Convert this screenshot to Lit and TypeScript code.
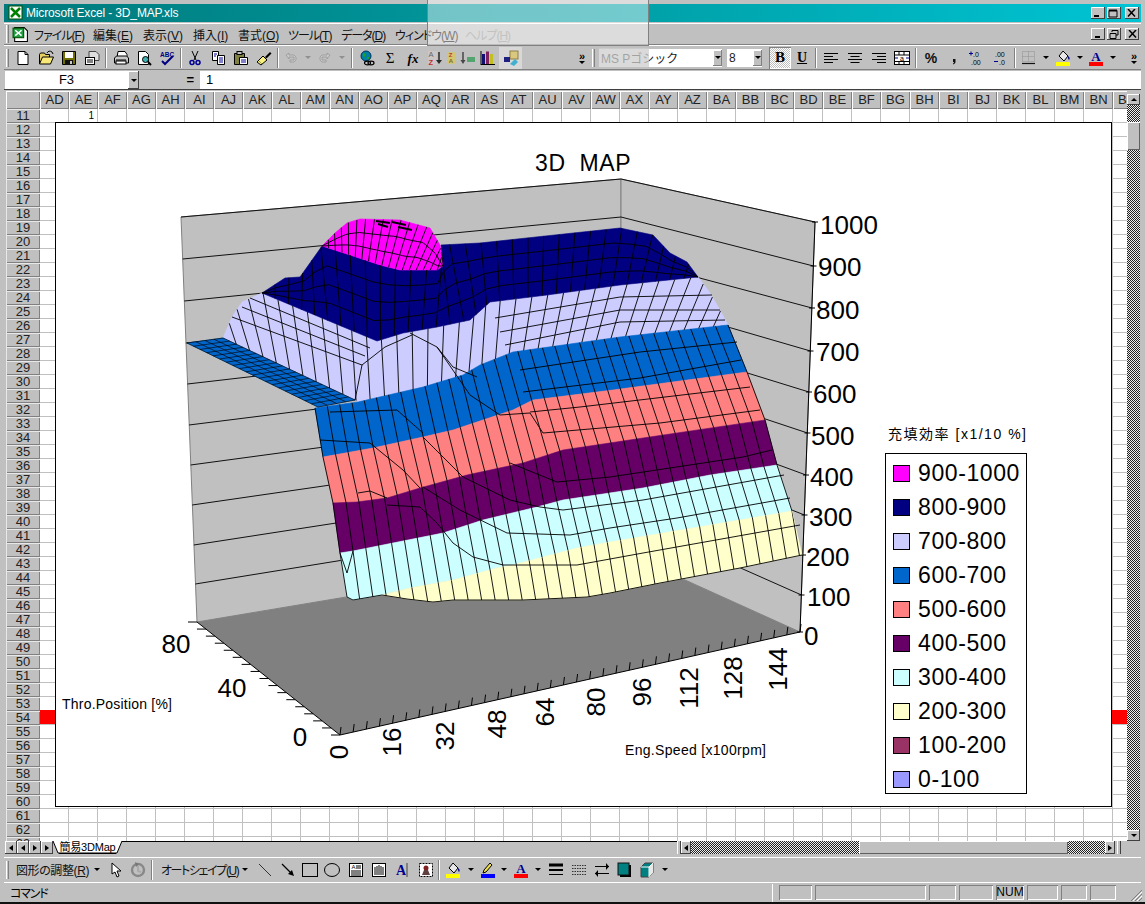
import { LitElement, html, css, svg } from 'lit';
import { customElement } from 'lit/decorators.js';

type P = [number, number];

// ---- surface outlines, read off the picture (page coordinates) ----
const NAVY_TOP: P[] = [[262, 293], [285, 278], [300, 277], [322, 246], [350, 255], [380, 265], [400, 270], [437, 270], [443, 266], [441, 245], [480, 243], [620, 228], [653, 235], [670, 253], [687, 262], [698, 277]];
const NAVY_LOW: P[] = [[262, 293], [377, 341], [403, 333], [437, 327], [470, 320], [490, 302], [547, 295], [620, 285], [698, 277]];
const MAGENTA_TOP: P[] = [[322, 246], [335, 233], [347, 223], [360, 219], [400, 220], [430, 228], [440, 245], [443, 266]];
const MAGENTA_LOW: P[] = [[322, 246], [350, 255], [380, 265], [400, 270], [437, 270], [443, 266]];
const LAV_TOP: P[] = [[223, 338], [232, 317], [242, 302], [262, 293], ...NAVY_LOW.slice(1), [710, 293], [720, 310], [728, 325]];
const LAV_LOW: P[] = [[223, 338], [355, 400], [358, 402], [423, 387], [463, 375], [480, 365], [513, 352], [620, 337], [728, 325]];
const B2: P[] = [[315, 408], [358, 402], [423, 387], [463, 375], [480, 365], [513, 352], [620, 337], [728, 325]];
const B3: P[] = [[323, 457], [373, 448], [423, 437], [453, 430], [513, 410], [533, 400], [613, 390], [747, 372]];
const B4: P[] = [[333, 503], [357, 502], [387, 498], [420, 488], [467, 475], [523, 463], [563, 450], [643, 438], [765, 420]];
const B5: P[] = [[340, 553], [353, 551], [393, 543], [443, 533], [483, 520], [537, 507], [563, 500], [643, 488], [710, 475], [777, 465]];
const B6: P[] = [[347, 597], [353, 600], [382, 595], [410, 588], [453, 580], [497, 568], [513, 565], [577, 548], [610, 542], [693, 528], [792, 511]];
const B6Y: P[] = B6.slice(2);
const B7: P[] = [[382, 595], [407, 599], [433, 602], [453, 600], [523, 600], [587, 597], [610, 593], [660, 583], [740, 568], [802, 555]];
const SHELF: P[] = [[187, 343], [223, 338], [355, 400], [318, 407]];

// rows of the mesh that bend across the bands, traced by hand
const EXTRA: P[][] = [
  [[232, 317], [362, 365], [385, 347], [412, 335]],
  [[250, 298], [370, 348]],
  [[242, 307], [365, 356]],
  [[362, 365], [355, 400]],
  [[495, 318], [620, 297], [712, 295]],
  [[500, 332], [620, 310], [720, 310]],
  [[505, 345], [620, 322], [725, 320]],
  [[410, 333], [437, 347], [453, 367], [477, 377]],
  [[437, 347], [470, 395], [500, 415], [530, 413]],
  [[520, 370], [640, 352], [737, 342]],
  [[523, 392], [640, 378], [741, 360]],
  [[320, 440], [370, 443]],
  [[358, 493], [370, 491], [387, 498]],
  [[387, 505], [420, 507], [437, 523], [453, 543], [473, 557], [503, 565], [577, 565], [643, 553], [800, 525]],
  [[423, 487], [460, 510], [507, 533], [570, 535], [610, 528], [677, 518], [790, 498]],
  [[510, 463], [557, 482], [610, 477], [743, 457], [772, 450]],
  [[423, 437], [463, 477], [510, 500], [540, 507], [563, 510], [643, 500], [784, 475]],
  [[530, 413], [543, 433], [660, 423], [760, 410]],
  [[530, 412], [580, 407], [750, 387]],
  [[370, 443], [403, 470], [420, 488]],
  [[330, 412], [397, 410], [423, 433]],
  [[340, 553], [347, 573], [353, 551]],
];

const LEFT_Y = [217, 259, 301, 343, 384, 425, 465, 505, 545, 584];
const BACK_Y = [179, 217, 257, 296, 334, 371, 407, 443, 479, 515];
const RIGHT_Y = [222, 266, 308, 351, 392, 433, 475, 515, 555, 595];

const VALUE_LABELS: [string, number, number][] = [
  ['1000', 820, 225], ['900', 818, 267], ['800', 816, 310], ['700', 816, 352], ['600', 813, 394],
  ['500', 811, 436], ['400', 810, 477], ['300', 809, 517], ['200', 806, 557], ['100', 807, 597], ['0', 804, 636],
];
const SPEED_LABELS: [string, number, number][] = [
  ['0', 339, 752], ['16', 392, 742], ['32', 445, 736], ['48', 497, 724], ['64', 545, 712],
  ['80', 596, 702], ['96', 642, 692], ['112', 689, 688], ['128', 733, 678], ['144', 778, 669],
];
const THROTTLE_LABELS: [string, number, number][] = [['80', 176, 644], ['40', 232, 688], ['0', 300, 737]];

const LEGEND: [string, string][] = [
  ['900-1000', '#ff00ff'], ['800-900', '#000080'], ['700-800', '#ccccff'], ['600-700', '#0066cc'], ['500-600', '#ff8080'],
  ['400-500', '#660066'], ['300-400', '#ccffff'], ['200-300', '#ffffcc'], ['100-200', '#993366'], ['0-100', '#9999ff'],
];

const mix = (a: P, b: P, t: number): P => [a[0] + (b[0] - a[0]) * t, a[1] + (b[1] - a[1]) * t];
const pts = (p: P[]) => p.map((q) => `${q[0].toFixed(1)},${q[1].toFixed(1)}`).join(' ');
const dist = (a: P, b: P) => Math.hypot(a[0] - b[0], a[1] - b[1]);

function resample(poly: P[], n: number): P[] {
  let total = 0;
  for (let i = 1; i < poly.length; i++) total += dist(poly[i - 1], poly[i]);
  const out: P[] = [];
  let seg = 0;
  let walked = 0;
  for (let k = 0; k <= n; k++) {
    const want = (total * k) / n;
    while (seg < poly.length - 2 && walked + dist(poly[seg], poly[seg + 1]) < want) {
      walked += dist(poly[seg], poly[seg + 1]);
      seg++;
    }
    const d = dist(poly[seg], poly[seg + 1]) || 1;
    out.push(mix(poly[seg], poly[seg + 1], Math.min(1, (want - walked) / d)));
  }
  return out;
}

function rowLine(top: P[], low: P[], f: number): string {
  const a = resample(top, 30);
  const b = resample(low, 30);
  return a.map((p, i) => {
    const q = mix(p, b[i], f);
    return `${i ? 'L' : 'M'}${q[0].toFixed(1)} ${q[1].toFixed(1)}`;
  }).join('');
}

function mesh(top: P[], low: P[], n: number, rows: number[] = []): string {
  const a = resample(top, n);
  const b = resample(low, n);
  let d = '';
  a.forEach((p, i) => {
    d += `M${p[0].toFixed(1)} ${p[1].toFixed(1)}L${b[i][0].toFixed(1)} ${b[i][1].toFixed(1)}`;
  });
  rows.forEach((f) => {
    d += rowLine(top, low, f);
  });
  return d;
}

// columns of the yellow band carry on from the cyan ones, the band's clip path trims them
function yellowMesh(): string {
  let d = '';
  resample(B6, 34).forEach((p) => {
    d += `M${p[0].toFixed(1)} ${p[1].toFixed(1)}l10 60`;
  });
  return d;
}

function shelfMesh(): string {
  const [a, b, c, e] = SHELF;
  let d = '';
  for (let i = 0; i <= 20; i++) {
    const p = mix(a, e, i / 20);
    const q = mix(b, c, i / 20);
    d += `M${p[0]} ${p[1]}L${q[0]} ${q[1]}`;
  }
  for (let i = 0; i <= 4; i++) {
    const p = mix(a, b, i / 4);
    const q = mix(e, c, i / 4);
    d += `M${p[0]} ${p[1]}L${q[0]} ${q[1]}`;
  }
  return d;
}

@customElement('surface-chart')
export class SurfaceChart extends LitElement {
  static styles = css`
    :host {
      display: block;
      position: relative;
      width: 1057px;
      height: 685px;
      font-family: 'Liberation Sans', Arial, sans-serif;
    }
    svg {
      display: block;
    }
    text {
      font-family: 'Liberation Sans', Arial, sans-serif;
      fill: #000;
    }
    .title {
      font-size: 23px;
      letter-spacing: 0.6px;
      white-space: pre;
    }
    .big {
      font-size: 26px;
      dominant-baseline: central;
    }
    .small {
      font-size: 14px;
    }
    .cjk {
      font-family: 'Liberation Sans', 'Noto Sans CJK JP', sans-serif;
      font-size: 14px;
      white-space: pre;
    }
    .legend {
      position: absolute;
      left: 830px;
      top: 331px;
      width: 142px;
      height: 341px;
      box-sizing: border-box;
      border: 1px solid #000;
      background: #fff;
      display: flex;
      flex-direction: column;
      padding-top: 2px;
    }
    .legend-item {
      height: 34px;
      flex: none;
      display: flex;
      align-items: center;
      padding-left: 7px;
      font-size: 23px;
      letter-spacing: 0.6px;
      color: #000;
    }
    .swatch {
      width: 15px;
      height: 15px;
      border: 1px solid #000;
      margin-right: 8px;
      flex: none;
    }
  `;

  render() {
    const wallLines = LEFT_Y.map((y, i) => {
      const lx = 181 + (i * 16) / 10;
      const rx = 815 - (i * 15) / 10;
      return svg`<polyline points="${lx},${y} 621,${BACK_Y[i]} ${rx},${RIGHT_Y[i]}" fill="none" stroke="#111" stroke-width="1"/>`;
    });
    const leftTicks = Array.from({ length: 17 }, (_, i) => {
      const p = mix([197, 622], [340, 735], i / 16);
      return svg`<line x1="${p[0]}" y1="${p[1]}" x2="${p[0] - 9}" y2="${p[1]}" stroke="#000"/>`;
    });
    const frontTicks = Array.from({ length: 36 }, (_, i) => {
      const p = mix([340, 735], [800, 632], i / 35);
      return svg`<line x1="${p[0]}" y1="${p[1]}" x2="${p[0] + 1}" y2="${p[1] - 8}" stroke="#000"/>`;
    });
    const rightTicks = RIGHT_Y.concat(632).map((y, i) => {
      const x = 815 - (i * 15) / 10;
      return svg`<line x1="${x - 3}" y1="${y}" x2="${x + 3}" y2="${y}" stroke="#000"/>`;
    });
    const yellow: P[] = [...B6Y, ...B7.slice().reverse()];
    return html`
      <svg width="1057" height="685" viewBox="55 122 1057 685">
        <rect x="55.5" y="122.5" width="1056" height="684" fill="#fff" stroke="#000"/>
        <text class="title" x="535" y="171">3D  MAP</text>
        <polygon points="181,217 621,179 621,551 197,622" fill="#c0c0c0" stroke="#808080"/>
        <polygon points="621,179 815,222 800,632 621,551" fill="#c0c0c0" stroke="#808080"/>
        ${wallLines}
        <polygon points="197,622 621,551 800,632 340,735" fill="#808080"/>
        <line x1="197" y1="622" x2="340" y2="735" stroke="#000"/>
        <line x1="340" y1="735" x2="800" y2="632" stroke="#000"/>
        <line x1="815" y1="222" x2="800" y2="632" stroke="#000"/>
        ${leftTicks} ${frontTicks} ${rightTicks}

        <defs><clipPath id="yclip"><polygon points="${pts(yellow)}"/></clipPath></defs>
        <g stroke-width="0.6">
          <polygon points="${pts([...LAV_TOP, ...LAV_LOW.slice().reverse()])}" fill="#ccccff" stroke="#ccccff"/>
          <polygon points="${pts([...NAVY_TOP, ...NAVY_LOW.slice().reverse()])}" fill="#000080" stroke="#000080"/>
          <polygon points="${pts([...MAGENTA_TOP, ...MAGENTA_LOW.slice().reverse()])}" fill="#ff00ff" stroke="#ff00ff"/>
          <polygon points="${pts(SHELF)}" fill="#0066cc" stroke="#0066cc"/>
          <polygon points="${pts([...B2, ...B3.slice().reverse()])}" fill="#0066cc" stroke="#0066cc"/>
          <polygon points="${pts([...B3, ...B4.slice().reverse()])}" fill="#ff8080" stroke="#ff8080"/>
          <polygon points="${pts([...B4, ...B5.slice().reverse()])}" fill="#660066" stroke="#660066"/>
          <polygon points="${pts([...B5, ...B6.slice().reverse()])}" fill="#ccffff" stroke="#ccffff"/>
          <polygon points="${pts(yellow)}" fill="#ffffcc" stroke="#ffffcc"/>
        </g>
        <g fill="none" stroke="#000" stroke-width="0.9">
          <path d="${mesh(LAV_TOP, LAV_LOW, 36)}"/>
          <path d="${mesh(NAVY_TOP, NAVY_LOW, 32, [0.25, 0.5, 0.75])}"/>
          <path d="${mesh(MAGENTA_TOP, MAGENTA_LOW, 18, [0.35, 0.7])}"/>
          <path d="${shelfMesh()}" stroke-opacity="0.7"/>
          <path d="${mesh(B2, B3, 34)}"/>
          <path d="${mesh(B3, B4, 34)}"/>
          <path d="${mesh(B4, B5, 34)}"/>
          <path d="${mesh(B5, B6, 34)}"/>
          <path clip-path="url(#yclip)" d="${yellowMesh()}"/>
          <polyline points="${pts(B7)}"/>
          <polyline points="347,597 353,600 382,595"/>
          ${EXTRA.map((l) => svg`<polyline points="${pts(l)}"/>`)}
          <path d="M376 221l14 2M392 222l14 3M398 227l14 3M378 224l10 3" stroke-width="2"/>
        </g>

        ${VALUE_LABELS.map(([t, x, y]) => svg`<text class="big" x="${x}" y="${y}">${t}</text>`)}
        ${THROTTLE_LABELS.map(([t, x, y]) => svg`<text class="big" x="${x}" y="${y}" text-anchor="middle">${t}</text>`)}
        ${SPEED_LABELS.map(([t, x, y]) => svg`<text class="big" text-anchor="middle" transform="translate(${x} ${y}) rotate(-90)">${t}</text>`)}
        <text class="small" x="62" y="709" textLength="110">Thro.Position [%]</text>
        <text class="small" x="625" y="755" textLength="141">Eng.Speed [x100rpm]</text>
        <text class="cjk" x="888" y="439" textLength="138">充填効率 [x1/10 %]</text>
      </svg>
      <div class="legend">
        ${LEGEND.map(([t, c]) => html`
          <div class="legend-item"><span class="swatch" style="background:${c}"></span>${t}</div>
        `)}
      </div>
    `;
  }
}

// ---- toolbar glyphs, 16x16 ----
const ICONS: Record<string, unknown> = {
  new: svg`<path d="M3 1.500h7l3 3v10H3z" fill="#fff" stroke="#000"/><path d="M10 1.500v3h3" fill="none" stroke="#000"/>`,
  open: svg`<path d="M1.500 14V4.500l1-1.500h4l1 1.500h4V7" fill="#e8d060" stroke="#000"/><path d="M1.500 14l3-7h11l-3 7z" fill="#f8e878" stroke="#000"/><path d="M9 3c1-2 3-2.500 5-1l1 2" fill="none" stroke="#000"/>`,
  save: svg`<path d="M1.500 1.500h13v13h-13z" fill="#707000" stroke="#000"/><rect x="4" y="2" width="8" height="6" fill="#fff"/><rect x="4" y="10" width="8" height="5" fill="#111"/><rect x="9" y="11" width="2" height="3" fill="#ccc"/>`,
  form: svg`<path d="M5 1.500h7l3 3v6H5z" fill="#ddd" stroke="#444"/><rect x="1.500" y="7.500" width="9" height="7" fill="#fff" stroke="#000"/><path d="M3 10h6M3 12h6" stroke="#000"/>`,
  print: svg`<path d="M5 1.500h7l2 3v3H4z" fill="#fff" stroke="#000"/><path d="M1.500 8l2-2h10l2 2v5h-14z" fill="#c8c8c8" stroke="#000"/><path d="M3 10h10" stroke="#000"/><rect x="3" y="11" width="10" height="3" fill="#fff" stroke="#000"/>`,
  preview: svg`<path d="M2.500 1.500h7l3 3v10h-10z" fill="#fff" stroke="#000"/><circle cx="9.500" cy="9.500" r="3" fill="#40b0b0" stroke="#000"/><path d="M12 12l3 3" stroke="#000" stroke-width="2"/>`,
  spell: svg`<text x="1" y="6.500" font-size="6.500" font-family="Liberation Sans" font-weight="700" fill="#000080">ABC</text><path d="M3 11l3 3 8-8" fill="none" stroke="#000080" stroke-width="2"/>`,
  cut: svg`<path d="M5 1l4 9M11 1L7 10" stroke="#000" fill="none"/><circle cx="5" cy="12.500" r="2" fill="none" stroke="#000090" stroke-width="1.500"/><circle cx="11" cy="12.500" r="2" fill="none" stroke="#000090" stroke-width="1.500"/>`,
  copy: svg`<path d="M2.500 1.500h6v9h-6z" fill="#fff" stroke="#000"/><path d="M7.500 5.500h7v9h-7z" fill="#fff" stroke="#000"/><path d="M4 4h3M4 6h2M9 8h4M9 10h4M9 12h4" stroke="#000090"/>`,
  paste: svg`<path d="M1.500 3.500h10v11h-10z" fill="#808040" stroke="#000"/><rect x="4" y="1.500" width="5" height="3" fill="#c0c0c0" stroke="#000"/><path d="M6.500 7.500h8v7h-8z" fill="#fff" stroke="#000"/><path d="M8 10h5M8 12h5" stroke="#000090"/>`,
  brush: svg`<path d="M1 12l6-6 4 4-6 5z" fill="#f8f080" stroke="#000"/><path d="M9 7l5-5 1.500 1.500-5 5z" fill="#000"/><path d="M3 11l3 3" stroke="#a0a040"/>`,
  undo: svg`<path d="M3 5l3-2v2h5l2 2v3l-2 2H7v-2h4V7H6v2z" fill="#c8c8c8" stroke="#989898" stroke-width="0.800"/>`,
  redo: svg`<path d="M13 5l-3-2v2H5L3 7v3l2 2h4v-2H5V7h5v2z" fill="#c8c8c8" stroke="#989898" stroke-width="0.800"/>`,
  web: svg`<circle cx="7" cy="6" r="5" fill="#0080a0" stroke="#003060"/><path d="M4 3l3 1-1 3-2-1zM8 7l2 0 0 2-2 0z" fill="#20a020"/><ellipse cx="8.500" cy="13" rx="3" ry="1.800" fill="none" stroke="#000" stroke-width="1.200"/><ellipse cx="12" cy="13" rx="3" ry="1.800" fill="none" stroke="#000" stroke-width="1.200"/>`,
  sigma: svg`<text x="8" y="13" text-anchor="middle" font-size="15" font-family="Liberation Serif" fill="#000">Σ</text>`,
  fx: svg`<text x="8" y="12.500" text-anchor="middle" font-size="13" font-style="italic" font-weight="700" font-family="Liberation Serif" fill="#000">fx</text>`,
  sortA: svg`<g opacity="0.85"><rect x="0" y="1" width="9" height="14" fill="#d0c8c8"/><text x="0.500" y="7" font-size="7.500" font-family="Liberation Sans" fill="#555">A</text><text x="0.500" y="14.500" font-size="7.500" font-weight="700" font-family="Liberation Sans" fill="#c01010">Z</text><path d="M11 2v10" stroke="#111" stroke-width="1.500"/><path d="M8 10h6l-3 4z" fill="#111"/></g>`,
  sortZ: svg`<g opacity="0.85"><rect x="1" y="1" width="9" height="14" fill="#d8c860"/><text x="2" y="7" font-size="7.500" font-weight="700" font-family="Liberation Sans" fill="#c02020">Z</text><text x="2" y="14.500" font-size="7.500" font-weight="700" font-family="Liberation Sans" fill="#706010">A</text></g>`,
  filter: svg`<g opacity="0.85"><path d="M3 2v10" stroke="#333" stroke-width="1.500"/><path d="M0.500 10h5l-2.500 4z" fill="#333"/><path d="M7 7h8v5H7z" fill="#40a060"/></g>`,
  bars: svg`<path d="M1 14.500h14" stroke="#000"/><rect x="2" y="4" width="3" height="10" fill="#101070"/><rect x="6" y="1.500" width="3" height="12.500" fill="#802060"/><rect x="10" y="4" width="3" height="10" fill="#c0c020"/><path d="M1 1v14" stroke="#000"/>`,
  map: svg`<rect x="7" y="1" width="8" height="8" fill="#d8c880" stroke="#908040"/><rect x="1" y="7" width="6" height="5" fill="#202080" /><path d="M7 14l5-5 3 3-4 4z" fill="#40b0d0"/>`,
  align1: svg`<path d="M1 3.500h14M1 6.500h9M1 9.500h14M1 12.500h9" stroke="#000"/>`,
  align2: svg`<path d="M1 3.500h14M3.500 6.500h9M1 9.500h14M3.500 12.500h9" stroke="#000"/>`,
  align3: svg`<path d="M1 3.500h14M6 6.500h9M1 9.500h14M6 12.500h9" stroke="#000"/>`,
  merge: svg`<rect x="0.500" y="1.500" width="15" height="13" fill="#fff" stroke="#000"/><path d="M0.500 5h15M0.500 11.500h15M5 1.500V5M10 1.500V5M5 11.500v3M10 11.500v3" stroke="#000"/><text x="8" y="10.500" text-anchor="middle" font-size="7" font-family="Liberation Sans" fill="#000">a</text><path d="M1 8h3M15 8h-3" stroke="#000080"/>`,
  percent: svg`<text x="8" y="13" text-anchor="middle" font-size="14" font-weight="700" font-family="Liberation Sans" fill="#111">%</text>`,
  comma: svg`<path d="M7 9h2.500v3c0 1-1 2-2.500 2.500v-1c.5-.2 1-.8 1-1.500H7z" fill="#111"/>`,
  inc: svg`<text x="4" y="7" font-size="7" font-family="Liberation Sans" fill="#000">.0</text><text x="2" y="14.500" font-size="7" font-family="Liberation Sans" fill="#000">.00</text><path d="M0 3.500h4M2 1.500v4" stroke="#000090"/>`,
  dec: svg`<text x="2" y="7" font-size="7" font-family="Liberation Sans" fill="#000">.00</text><text x="6" y="14.500" font-size="7" font-family="Liberation Sans" fill="#000">.0</text><path d="M1 11.500h4" stroke="#000090"/>`,
  borders: svg`<path d="M1.500 1.500h12v10h-12zM1.500 6.500h12M7.500 1.500v10" fill="none" stroke="#909090" stroke-dasharray="1 1"/><path d="M1 13.500h13" stroke="#111" stroke-width="1.200"/>`,
  fill: svg`<path d="M8 1l5 5-4 5-5-5z" fill="#e8e8e8" stroke="#000"/><path d="M13 6c2 1 2 3 1 4-1-1-1-2-1-4z" fill="#000080"/><rect x="1" y="12" width="14" height="4" fill="#ffff00"/>`,
  color: svg`<text x="8" y="11" text-anchor="middle" font-size="13" font-weight="700" font-family="Liberation Serif" fill="#000090">A</text><rect x="1" y="12" width="14" height="4" fill="#ff0000"/>`,
  pen: svg`<path d="M10 1l2 2-6 7-3 1 1-3z" fill="#f0e050" stroke="#000"/><rect x="1" y="12" width="14" height="4" fill="#0000ff"/>`,
  cursor: svg`<path d="M4 1v11l3-2 2 5 2-1-2-5h4z" fill="#fff" stroke="#000"/>`,
  rotate: svg`<circle cx="8" cy="8" r="6" fill="none" stroke="#888" stroke-width="2.400"/><path d="M8 4v5l3 1" fill="none" stroke="#aaa" stroke-width="2"/><path d="M5 0l4 2-3 3z" fill="#777"/>`,
  line: svg`<path d="M2 2l12 12" stroke="#333"/>`,
  arrow: svg`<path d="M2 2l9 9" stroke="#000" stroke-width="1.200"/><path d="M14 14l-6-2 4-4z" fill="#000"/>`,
  rect: svg`<rect x="0.500" y="1.500" width="15" height="13" fill="none" stroke="#000"/>`,
  oval: svg`<ellipse cx="8" cy="8" rx="7.500" ry="6.500" fill="none" stroke="#000"/>`,
  textbox: svg`<rect x="1.500" y="1.500" width="13" height="13" fill="#fff" stroke="#000"/><text x="5.500" y="7" text-anchor="middle" font-size="6" font-family="Liberation Sans" fill="#000">A</text><path d="M8 4h5M8 6h5M3 9h10M3 11h10M3 13h10" stroke="#000"/>`,
  wordart: svg`<rect x="1.500" y="1.500" width="13" height="13" fill="#fff" stroke="#000"/><path d="M4 13V5M6 13V4M8 13V3M10 13V4M12 13V5" stroke="#000"/>`,
  wordA: svg`<text x="7" y="13" text-anchor="middle" font-size="14" font-weight="700" font-family="Liberation Serif" fill="#000090">A</text><path d="M13 1v14" stroke="#808080" stroke-width="2"/>`,
  pic: svg`<rect x="1.500" y="1.500" width="13" height="13" fill="#fff" stroke="#000" stroke-dasharray="2 1"/><circle cx="8" cy="6" r="2.500" fill="#802020"/><path d="M4 13l2-5h4l2 5z" fill="#604040"/>`,
  weight: svg`<path d="M1 3h14" stroke="#000" stroke-width="3"/><path d="M1 8h14" stroke="#000" stroke-width="2"/><path d="M1 12.500h14" stroke="#000"/>`,
  dash: svg`<path d="M1 3.500h14M1 6.500h14M1 9.500h14M1 12.500h14" stroke="#333" stroke-dasharray="1.500 1"/>`,
  arrows: svg`<path d="M1 4.500h14M1 11.500h14" stroke="#000" stroke-width="1.200"/><path d="M12 1l3 3.500-3 3.500zM4 8l-3 3.500L4 15z" fill="#000"/>`,
  shadow: svg`<rect x="4" y="3" width="11" height="12" fill="#000"/><rect x="2" y="1" width="11" height="12" fill="#008080" stroke="#111"/>`,
  cube: svg`<path d="M2 5l4-4h8v10l-4 4H2z" fill="#008080" stroke="#444"/><path d="M2 5h8l4-4M10 5v10" fill="none" stroke="#fff"/><path d="M10 5l4-4v10l-4 4z" fill="#e8e8e8"/>`,
  xl: svg`<rect x="1" y="1" width="13" height="13" fill="#fff" stroke="#005000"/><path d="M3 3l9 9M12 3l-9 9" stroke="#008000" stroke-width="2.500"/>`,
  xldoc: svg`<path d="M2.500 1.500h9l3 3v10h-12z" fill="#fff" stroke="#000"/><rect x="1" y="2" width="10" height="9" fill="#20a040" stroke="#005000"/><path d="M3 4l6 5M9 4l-6 5" stroke="#fff" stroke-width="1.500"/>`,
};

const MENUS: [string, string, number, boolean][] = [
  ['ファイル', 'F', 59, true], ['編集', 'E', 50, false], ['表示', 'V', 50, false], ['挿入', 'I', 45, false], ['書式', 'O', 50, false],
  ['ツール', 'T', 53, true], ['データ', 'D', 54, true], ['ウィンドウ', 'W', 70, true], ['ヘルプ', 'H', 50, true],
];
const COL_NAMES = ['AD', 'AE', 'AF', 'AG', 'AH', 'AI', 'AJ', 'AK', 'AL', 'AM', 'AN', 'AO', 'AP', 'AQ', 'AR', 'AS', 'AT', 'AU', 'AV', 'AW', 'AX', 'AY', 'AZ', 'BA', 'BB', 'BC', 'BD', 'BE', 'BF', 'BG', 'BH', 'BI', 'BJ', 'BK', 'BL', 'BM', 'BN', 'BO'];
const ROW_NUMS = Array.from({ length: 53 }, (_, i) => i + 11);
const STATUS_PANELS: [number, string][] = [[33, ''], [111, ''], [27, ''], [34, ''], [28, 'NUM'], [31, ''], [26, ''], [26, '']];

@customElement('app-root')
export class AppRoot extends LitElement {
  static styles = css`
    :host {
      display: block;
      position: relative;
      width: 1145px;
      height: 904px;
      overflow: hidden;
      background: #c0c0c0;
      font-family: 'Liberation Sans', Arial, 'Noto Sans CJK JP', sans-serif;
      color: #000;
    }
    .window {
      display: flex;
      flex-direction: column;
      height: 904px;
      box-sizing: border-box;
      padding: 4px 4px 0;
      border-bottom: 2px solid #111;
    }
    .titlebar {
      height: 18px;
      display: flex;
      align-items: center;
      padding-left: 4px;
      background: linear-gradient(90deg, #007a7c 0%, #009ca2 50%, #00c4d4 100%);
      color: #fff;
      font-size: 12px;
      letter-spacing: -0.15px;
      flex: none;
    }
    .titlebar svg {
      margin-right: 2px;
    }
    .titlebar span {
      flex: 1;
    }
    .capbtn {
      width: 14px;
      height: 12px;
      margin-right: 2px;
      background: #c0c0c0;
      box-shadow: inset -1px -1px #404040, inset 1px 1px #fff;
      display: flex;
      align-items: center;
      justify-content: center;
      flex: none;
    }
    .capbtn.gap {
      margin-left: 2px;
    }
    .menubar {
      height: 22px;
      margin-top: 1px;
      display: flex;
      align-items: center;
      flex: none;
      font-family: 'Liberation Sans', 'Noto Sans CJK JP', sans-serif;
      font-size: 12px;
      font-feature-settings: 'palt';
      border-top: 1px solid #fff;
      border-bottom: 1px solid #808080;
      box-sizing: border-box;
    }
    .grip {
      width: 3px;
      height: 18px;
      margin: 0 2px;
      box-sizing: border-box;
      border-left: 1px solid #fff;
      border-right: 1px solid #808080;
      flex: none;
    }
    .menu-icon {
      margin: 0 5px 0 1px;
      display: flex;
    }
    .menu-item {
      flex: none;
      white-space: nowrap;
      color: #111;
    }
    .menu-item.kana {
      letter-spacing: -1px;
    }
    .menu-item.off {
      color: #909090;
    }
    .menu-item u {
      text-underline-offset: 1px;
    }
    .toolbar {
      height: 25px;
      display: flex;
      align-items: center;
      flex: none;
      border-bottom: 1px solid #808080;
      border-top: 1px solid #fff;
      box-sizing: border-box;
    }
    .btn {
      height: 22px;
      display: flex;
      align-items: center;
      justify-content: center;
      flex: none;
    }
    .btn.b-on {
      background: repeating-conic-gradient(#fff 0 25%, #c0c0c0 0 50%) 0 0 / 2px 2px;
      box-shadow: inset 1px 1px #808080, inset -1px -1px #fff;
    }
    .btn.hover {
      background: #d8d8d8;
    }
    .sep {
      width: 2px;
      height: 20px;
      margin: 0 2px;
      box-sizing: border-box;
      border-left: 1px solid #808080;
      border-right: 1px solid #fff;
      flex: none;
    }
    .drop {
      width: 0;
      height: 0;
      border-left: 3px solid transparent;
      border-right: 3px solid transparent;
      border-top: 3px solid #000;
    }
    .drop.off {
      border-top-color: #909090;
    }
    .chev {
      display: flex;
      flex-direction: column;
      align-items: center;
      font-size: 11px;
      line-height: 9px;
      font-weight: 700;
      width: 14px;
      flex: none;
    }
    .combo {
      height: 18px;
      background: #fff;
      display: flex;
      align-items: center;
      flex: none;
      box-sizing: border-box;
      padding-left: 2px;
      font-size: 12px;
      font-family: 'Liberation Sans', 'Noto Sans CJK JP', sans-serif;
      color: #222;
    }
    .combo span {
      flex: 1;
      white-space: nowrap;
    }
    .font-combo {
      width: 123px;
    }
    .size-combo {
      width: 35px;
      margin-left: 5px;
    }
    .arrowbtn {
      width: 9px;
      height: 16px;
      background: #c0c0c0;
      box-shadow: inset -1px -1px #808080, inset 1px 1px #fff;
      display: flex;
      align-items: center;
      justify-content: center;
      flex: none;
    }
    .formula {
      height: 19px;
      margin-top: 1px;
      display: flex;
      flex: none;
      font-size: 13px;
      border-bottom: 1px solid #404040;
      box-sizing: border-box;
    }
    .namebox {
      width: 123px;
      margin-left: 1px;
      background: #fff;
      text-align: center;
      line-height: 18px;
      flex: none;
    }
    .combo-arrow {
      width: 11px;
      height: 18px;
      background: #c0c0c0;
      box-shadow: inset -1px -1px #404040, inset 1px 1px #fff;
      display: flex;
      align-items: center;
      justify-content: center;
      flex: none;
    }
    .eq {
      width: 61px;
      text-align: right;
      padding-right: 6px;
      box-sizing: border-box;
      font-weight: 700;
      line-height: 18px;
      flex: none;
    }
    .fx-input {
      flex: 1;
      background: #fff;
      padding-left: 6px;
      line-height: 18px;
    }
    .sheet {
      margin-top: 1px;
      height: 750px;
      display: grid;
      grid-template-columns: 34px 1087px 13px;
      grid-template-rows: 18px 732px;
      margin-left: 2px;
      flex: none;
    }
    .corner {
      background: #c0c0c0;
      box-shadow: inset 1px 1px #fff, inset -1px -1px #808080;
    }
    .colheads {
      display: flex;
      overflow: hidden;
    }
    .colhead {
      width: 29px;
      flex: none;
      box-sizing: border-box;
      text-align: center;
      font-size: 13px;
      line-height: 17px;
      color: #222;
      box-shadow: inset 1px 1px #fff, inset -1px -1px #808080;
    }
    .rowheads {
      overflow: hidden;
      display: flex;
      flex-direction: column;
    }
    .rowhead {
      height: 14px;
      flex: none;
      text-align: center;
      font-size: 13px;
      line-height: 13px;
      color: #222;
      box-sizing: border-box;
      box-shadow: inset 1px 1px #e8e8e8, inset -1px -1px #808080;
    }
    .cells {
      position: relative;
      overflow: hidden;
      display: flex;
      flex-direction: column;
      background-color: #fff;
      background-image: linear-gradient(#c0c0c0 0 1px, transparent 1px), linear-gradient(90deg, #c0c0c0 0 1px, transparent 1px);
      background-size: 100% 14px, 29px 100%;
      background-position: 0 13px, 28px 0;
    }
    .value-row {
      height: 13px;
      padding-left: 29px;
      display: flex;
      flex: none;
    }
    .value-row span {
      width: 25px;
      text-align: right;
      font-size: 10px;
      line-height: 14px;
    }
    .spacer-row {
      height: 588px;
      flex: none;
    }
    .red-row {
      height: 14px;
      background: #ff0000;
      flex: none;
    }
    .chart-slot {
      position: absolute;
      left: 15px;
      top: 13px;
    }
    .vscroll {
      grid-row: 1 / 3;
      grid-column: 3;
      display: flex;
      flex-direction: column;
    }
    .arrow-box {
      width: 13px;
      height: 11px;
      flex: none;
      background: #c0c0c0;
      box-shadow: inset -1px -1px #404040, inset 1px 1px #fff;
      display: flex;
      align-items: center;
      justify-content: center;
    }
    .vspace-top {
      height: 3px;
      flex: none;
    }
    .dither {
      background: repeating-conic-gradient(#222 0 25%, #eee 0 50%) 0 0 / 2px 2px;
    }
    .dither.v1 {
      height: 17px;
      flex: none;
    }
    .dither.v2 {
      flex: 1;
    }
    .thumb {
      background: #c0c0c0;
      box-shadow: inset 1px 1px #fff, inset -1px -1px #606060;
      flex: none;
    }
    .thumb.v {
      height: 28px;
    }
    .tabs {
      height: 13px;
      display: flex;
      align-items: stretch;
      flex: none;
      margin-left: 1px;
    }
    .nav {
      width: 12px;
      flex: none;
      background: #c0c0c0;
      box-shadow: inset -1px -1px #404040, inset 1px 1px #fff;
      display: flex;
      align-items: center;
      justify-content: center;
    }
    .tri-l,
    .tri-r {
      width: 0;
      height: 0;
      border-top: 3px solid transparent;
      border-bottom: 3px solid transparent;
    }
    .tri-l {
      border-right: 4px solid #000;
    }
    .tri-r {
      border-left: 4px solid #000;
    }
    .tab {
      position: relative;
      width: 69px;
      flex: none;
      text-align: center;
      font-size: 11px;
      line-height: 12px;
      letter-spacing: -0.2px;
      font-family: 'Liberation Sans', 'Noto Sans CJK JP', sans-serif;
      white-space: nowrap;
    }
    .tab svg {
      position: absolute;
      left: 0;
      top: 0;
    }
    .tab span {
      position: relative;
      border-bottom: 1px solid #000;
    }
    .tab-fill {
      flex: 1;
      border-top: 1px solid #000;
      box-sizing: border-box;
    }
    .hsplit {
      width: 4px;
      flex: none;
      box-shadow: inset 1px 0 #fff, inset -1px 0 #404040;
    }
    .hbtn {
      width: 10px;
      flex: none;
      background: #c0c0c0;
      box-shadow: inset -1px -1px #404040, inset 1px 1px #fff;
      display: flex;
      align-items: center;
      justify-content: center;
    }
    .dither.h1 {
      width: 168px;
      flex: none;
    }
    .dither.h2 {
      width: 37px;
      flex: none;
    }
    .thumb.h {
      width: 209px;
    }
    .tabs-end {
      width: 20px;
      flex: none;
    }
    .drawbar {
      height: 24px;
      margin-top: 3px;
      display: flex;
      align-items: center;
      flex: none;
      border-top: 1px solid #fff;
      box-sizing: border-box;
      font-size: 12px;
      font-family: 'Liberation Sans', 'Noto Sans CJK JP', sans-serif;
      font-feature-settings: 'palt';
    }
    .draw-label {
      flex: none;
      white-space: nowrap;
      color: #111;
    }
    .draw-label.tight {
      letter-spacing: -0.4px;
    }
    .draw-label.tighter {
      letter-spacing: -1.4px;
    }
    .statusbar {
      height: 20px;
      margin-top: 1px;
      display: flex;
      align-items: center;
      flex: none;
      font-size: 12px;
      font-family: 'Liberation Sans', 'Noto Sans CJK JP', sans-serif;
      border-top: 1px solid #fff;
      box-sizing: border-box;
      position: relative;
    }
    .status-text {
      width: 768px;
      padding-left: 6px;
      box-sizing: border-box;
      flex: none;
      font-feature-settings: 'palt';
      letter-spacing: -1.2px;
    }
    .status-sep {
      width: 1px;
      height: 18px;
      background: #fff;
      margin-right: 6px;
      flex: none;
    }
    .panel {
      height: 15px;
      margin-right: 3px;
      box-sizing: border-box;
      box-shadow: inset 1px 1px #808080, inset -1px -1px #fff;
      font-size: 12px;
      line-height: 15px;
      text-align: center;
      flex: none;
    }
    .resize {
      position: absolute;
      right: -2px;
      bottom: 0;
    }
    .ghost {
      position: absolute;
      left: 427px;
      top: 0;
      width: 222px;
      height: 46px;
      background: rgba(255, 255, 255, 0.45);
      box-sizing: border-box;
      border: 1px solid #808080;
      border-top: none;
    }
    .ghost-font {
      position: absolute;
      left: 599px;
      top: 48px;
      width: 50px;
      height: 19px;
      background: rgba(205, 205, 205, 0.75);
    }
  `;

  private icon(name: string, size = 16) {
    return html`<svg width="${size}" height="${size}" viewBox="0 0 16 16">${ICONS[name]}</svg>`;
  }

  private btn(name: string, w = 23, cls = '') {
    return html`<div class="btn ${cls}" style="width:${w}px">${this.icon(name)}</div>`;
  }

  private drop(w = 11, off = false) {
    return html`<div class="btn" style="width:${w}px"><div class="drop ${off ? 'off' : ''}"></div></div>`;
  }

  render() {
    return html`
      <div class="window">
        <div class="titlebar">
          ${this.icon('xl')}
          <span>Microsoft Excel - 3D_MAP.xls</span>
          <div class="capbtn"><svg width="8" height="8"><path d="M1 7h5" stroke="#000" stroke-width="2"/></svg></div>
          <div class="capbtn"><svg width="10" height="9"><path d="M1 1.500h8v6.500H1z" fill="none" stroke="#000"/><path d="M1 1.500h8" stroke="#000" stroke-width="2"/></svg></div>
          <div class="capbtn gap"><svg width="9" height="8"><path d="M1 0l7 7.500M8 0L1 7.500" stroke="#000" stroke-width="1.500"/></svg></div>
        </div>

        <div class="menubar">
          <div class="grip"></div>
          <div class="menu-icon">${this.icon('xldoc', 17)}</div>
          ${MENUS.map(([label, key, w, kana], i) => html`
            <div class="menu-item ${kana ? 'kana' : ''} ${i === 8 ? 'off' : ''}" style="width:${w}px">${label}(<u>${key}</u>)</div>
          `)}
          <div style="flex:1"></div>
          <div class="capbtn"><svg width="8" height="8"><path d="M1 7h5" stroke="#000" stroke-width="2"/></svg></div>
          <div class="capbtn"><svg width="10" height="9"><path d="M3 2V.5h6v4.500H7M1 3.500h6V8.500H1z" fill="none" stroke="#000"/></svg></div>
          <div class="capbtn gap"><svg width="9" height="8"><path d="M1 0l7 7.500M8 0L1 7.500" stroke="#000" stroke-width="1.500"/></svg></div>
        </div>

        <div class="toolbar">
          <div class="grip"></div>
          ${this.btn('new')}${this.btn('open')}${this.btn('save')}${this.btn('form')}
          <div class="sep"></div>
          ${this.btn('print')}${this.btn('preview')}${this.btn('spell')}
          <div class="sep" style="margin-left:2px;margin-right:1px"></div>
          ${this.btn('cut')}${this.btn('copy')}${this.btn('paste')}${this.btn('brush')}
          <div class="sep"></div>
          ${this.btn('undo', 20)}${this.drop(14, true)}${this.btn('redo', 20)}${this.drop(14, true)}
          <div class="sep"></div>
          ${this.btn('web')}${this.btn('sigma')}${this.btn('fx')}${this.btn('sortA')}${this.btn('sortZ', 13)}${this.btn('filter', 16)}${this.btn('bars')}${this.btn('map', 23, 'hover')}
          <div class="chev" style="margin-left:53px">»<div class="drop"></div></div>
          <div class="grip" style="margin-left:3px;margin-right:4px"></div>
          <div class="combo font-combo"><span>MS Pゴシック</span><div class="arrowbtn"><div class="drop"></div></div></div>
          <div class="combo size-combo"><span>8</span><div class="arrowbtn"><div class="drop"></div></div></div>
          <div style="width:10px"></div>
          <div class="btn b-on" style="width:22px;font:700 15px 'Liberation Serif',serif">B</div>
          <div class="btn" style="width:22px;font:700 14px 'Liberation Serif',serif;text-decoration:underline">U</div>
          <div class="sep"></div>
          ${this.btn('align1', 24)}${this.btn('align2', 24)}${this.btn('align3', 24)}${this.btn('merge', 22)}
          <div class="sep"></div>
          ${this.btn('percent')}${this.btn('comma')}${this.btn('inc', 24)}${this.btn('dec', 24)}
          <div class="sep" style="margin-left:1px"></div>
          ${this.btn('borders', 22)}${this.drop()}${this.btn('fill')}${this.drop()}${this.btn('color', 22)}${this.drop(12)}
          <div class="chev" style="margin-left:8px">»<div class="drop"></div></div>
        </div>

        <div class="formula">
          <div class="namebox">F3</div>
          <div class="combo-arrow"><div class="drop"></div></div>
          <div class="eq">=</div>
          <div class="fx-input">1</div>
        </div>

        <div class="sheet">
          <div class="corner"></div>
          <div class="colheads">${COL_NAMES.map((c) => html`<div class="colhead">${c}</div>`)}</div>
          <div class="vscroll">
            <div class="vspace-top"></div>
            <div class="arrow-box"><div class="drop" style="transform:rotate(180deg)"></div></div>
            <div class="dither v1"></div>
            <div class="thumb v"></div>
            <div class="dither v2"></div>
            <div class="arrow-box"><div class="drop"></div></div>
          </div>
          <div class="rowheads">${ROW_NUMS.map((n) => html`<div class="rowhead">${n}</div>`)}</div>
          <div class="cells">
            <div class="value-row"><span>1</span></div>
            <div class="spacer-row"></div>
            <div class="red-row"></div>
            <div class="chart-slot"><surface-chart></surface-chart></div>
          </div>
        </div>

        <div class="tabs">
          <div class="nav"><div class="tri-l"></div></div>
          <div class="nav"><div class="tri-l"></div></div>
          <div class="nav"><div class="tri-r"></div></div>
          <div class="nav"><div class="tri-r"></div></div>
          <div class="tab">
            <svg width="69" height="13"><path d="M0 0l5 12h59l5-12" fill="#fff" stroke="#000"/></svg>
            <span>簡易3DMap</span>
          </div>
          <div class="tab-fill"></div>
          <div class="hsplit"></div>
          <div class="hbtn"><div class="tri-l"></div></div>
          <div class="dither h1"></div>
          <div class="thumb h"></div>
          <div class="dither h2"></div>
          <div class="hbtn"><div class="tri-r"></div></div>
          <div class="hsplit" style="margin-left:2px"></div>
          <div class="tabs-end"></div>
        </div>

        <div class="drawbar">
          <div class="grip" style="margin-right:7px"></div>
          <div class="draw-label tight" style="width:73px">図形の調整(<u>R</u>)</div>
          ${this.drop(16)}${this.btn('cursor', 21)}${this.btn('rotate')}
          <div class="sep" style="margin-right:8px"></div>
          <div class="draw-label tighter" style="width:76px">オートシェイプ(<u>U</u>)</div>
          ${this.drop(16)}${this.btn('line')}${this.btn('arrow')}${this.btn('rect', 21)}${this.btn('oval', 24)}
          ${this.btn('textbox', 24)}${this.btn('wordart', 22)}${this.btn('wordA', 24)}${this.btn('pic')}
          <div class="sep" style="margin-left:1px"></div>
          ${this.btn('fill', 22)}${this.drop(14)}${this.btn('pen', 20)}${this.drop(12)}${this.btn('color', 21)}${this.drop(14)}
          ${this.btn('weight', 22)}${this.btn('dash')}${this.btn('arrows')}${this.btn('shadow', 22)}${this.btn('cube')}${this.drop(14)}
        </div>

        <div class="statusbar">
          <div class="status-text">コマンド</div>
          <div class="status-sep"></div>
          ${STATUS_PANELS.map(([w, t]) => html`<div class="panel" style="width:${w}px">${t}</div>`)}
          <svg class="resize" width="14" height="14"><path d="M13 2L2 13M13 6L6 13M13 10L10 13" stroke="#808080"/><path d="M13 4L4 13M13 8L8 13" stroke="#fff"/></svg>
        </div>
      </div>
      <div class="ghost"></div>
      <div class="ghost-font"></div>
    `;
  }
}
